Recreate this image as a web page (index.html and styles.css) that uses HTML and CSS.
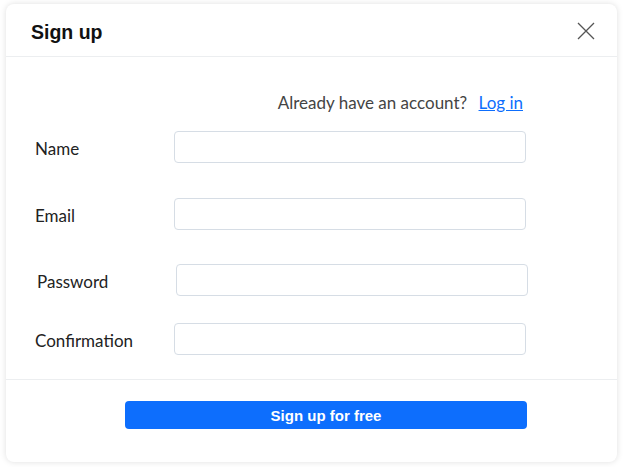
FILE: index.html
```html
<!DOCTYPE html>
<html>
<head>
<meta charset="utf-8">
<link rel="stylesheet" href="styles.css">
</head>
<body>
<div class="modal">
  <div class="modal-header">
    <h1 class="modal-title">Sign up</h1>
    <button class="close" aria-label="Close">
      <svg width="18" height="18" viewBox="0 0 18 18"><path d="M1 1L17 17M17 1L1 17" stroke="#555" stroke-width="1.3" fill="none"/></svg>
    </button>
  </div>
  <div class="modal-body">
    <div class="login-line">Already have an account? <a href="#" class="login-link">Log in</a></div>
    <div class="row row-name"><label class="label">Name</label><input class="input" type="text"></div>
    <div class="row row-email"><label class="label">Email</label><input class="input" type="email"></div>
    <div class="row row-password shifted"><label class="label">Password</label><input class="input" type="password"></div>
    <div class="row row-confirm"><label class="label">Confirmation</label><input class="input" type="password"></div>
  </div>
  <div class="modal-footer">
    <button class="submit">Sign up for free</button>
  </div>
</div>
</body>
</html>
```
FILE: styles.css
```css
* { box-sizing: border-box; }
html, body { margin: 0; padding: 0; background: #fff; }
body { width: 623px; height: 467px; overflow: hidden; }
.modal {
  margin: 4px 0 0 6px;
  width: 611px;
  height: 458px;
  background: #fff;
  border-radius: 8px;
  box-shadow: 0 0 6px rgba(0,0,0,0.13);
  display: flex;
  flex-direction: column;
}
.modal-header {
  height: 53px;
  border-bottom: 1px solid #eceef0;
  display: flex;
  align-items: center;
  justify-content: space-between;
  padding: 0 22px 0 25px;
}
.modal-title {
  margin: 0;
  font-family: "Liberation Sans", Arial, sans-serif;
  font-weight: 700;
  font-size: 19.5px;
  color: #111;
  padding-top: 4px;
}
.close {
  border: 0; background: none; padding: 0; width: 18px; height: 18px;
  margin-top: 2px;
  display: flex;
}
.modal-body {
  flex: 1;
  padding: 34px 91px 0 29px;
  border-bottom: 1px solid #eceef0;
  font-family: "Lato", "Noto Sans", sans-serif;
  font-size: 17px;
  color: #222;
}
.login-line {
  text-align: right;
  line-height: 24px;
  color: #444;
  margin-right: 3px;
}
.login-link { color: #0d6efd; margin-left: 7px; }
.row {
  display: grid;
  grid-template-columns: 139px 1fr;
  align-items: center;
}
.row-name { margin-top: 16px; }
.row-email { margin-top: 35px; }
.row-password { margin-top: 34px; }
.row-confirm { margin-top: 27px; }
.shifted { margin-left: 2px; margin-right: -2px; }
.label { padding-top: 3px; }
.input {
  height: 32px;
  border: 1px solid #d6dde5;
  border-radius: 4px;
  width: 100%;
  background: #fff;
}
.modal-footer {
  height: 82px;
  padding: 21px 90px 0 119px;
}
.submit {
  width: 100%;
  height: 28px;
  border: 0;
  border-radius: 4px;
  background: #0d6efd;
  color: #fff;
  font-family: "Liberation Sans", Arial, sans-serif;
  font-weight: 700;
  font-size: 15px;
}
```
